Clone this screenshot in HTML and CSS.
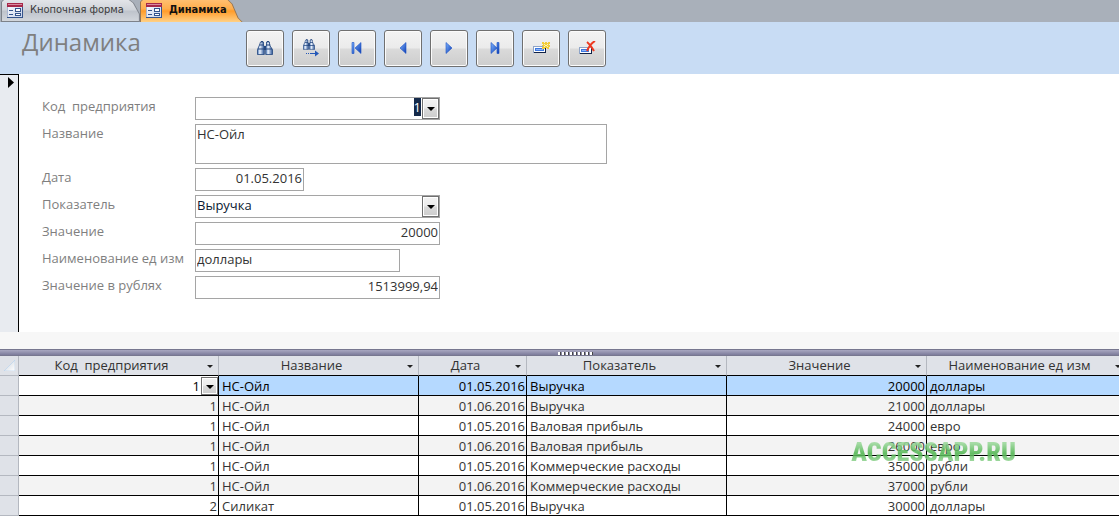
FILE: index.html
```html
<!DOCTYPE html>
<html lang="ru">
<head>
<meta charset="utf-8">
<title>Динамика</title>
<link rel="stylesheet" href="styles.css">
</head>
<body>
<svg class="defs" aria-hidden="true">
  <defs>
    <linearGradient id="blue" x1="0" y1="0" x2="1" y2="1"><stop offset="0" stop-color="#7fb4ff"/><stop offset="1" stop-color="#0c3cb4"/></linearGradient>
    <linearGradient id="steel" x1="0" y1="0" x2="1" y2="0"><stop offset="0" stop-color="#3f70b4"/><stop offset=".35" stop-color="#f0f6ff"/><stop offset="1" stop-color="#2a5496"/></linearGradient>
    <linearGradient id="page" x1="0" y1="0" x2="1" y2="1"><stop offset="0" stop-color="#fff"/><stop offset="1" stop-color="#c4d0ea"/></linearGradient>
    <linearGradient id="corner" x1="0" y1="0" x2="1" y2="1"><stop offset=".4" stop-color="#dfe4ea"/><stop offset="1" stop-color="#fff"/></linearGradient>
    <symbol id="form" viewBox="0 0 16 15">
      <path fill="url(#page)" d="M0 0h16v15H0z"/>
      <path fill="#a62849" d="M0 0h16v4H0z"/><path fill="#d98ba0" d="M1 1h14v1H1z"/>
      <path fill="#a9b6d2" d="M0 4h1v10H0z"/>
      <path fill="#35548c" d="M2 7h4v1H2zM2 11h4v1H2zM8 5h6v4H8zM8 10h6v3H8zM15 4h1v11H0v-1h15z"/>
      <path fill="#fff" d="M9 6h4v2H9zM9 11h4v1H9z"/>
    </symbol>
    <symbol id="binoc" viewBox="0 0 16 14">
      <g fill="url(#steel)" stroke="#24477f" stroke-width=".8">
        <path d="M3.500 1h3v3l.8 2v7.500H.5V8.500l2-4.500z"/><path d="M9.500 1h3v3l3 4.500v5H8.700V6l.8-2z"/>
      </g>
      <path fill="#24477f" d="M4 0h2v1H4zM10 0h2v1h-2zM2.500 3.500h4.500v1H2.500zM9 3.500h4.500v1H9zM1 7.500h6v1H1zM9 7.500h6v1H9zM7 5h2v4H7z"/>
    </symbol>
  </defs>
</svg>

<nav class="tabs">
  <button class="tab" type="button"><svg class="form-icon"><use href="#form"/></svg><span>Кнопочная форма</span></button>
  <button class="tab active" type="button"><svg class="form-icon"><use href="#form"/></svg><span>Динамика</span></button>
</nav>

<header class="head">
  <h1 class="title">Динамика</h1>
  <div class="tools">
    <button class="tool" type="button" aria-label="Найти"><svg width="16" height="14"><use href="#binoc"/></svg></button>
    <button class="tool" type="button" aria-label="Найти далее"><svg width="16" height="18"><use href="#binoc" width="12" height="11"/><path fill="#2558b8" d="M3 14h1v1H3zM5 14h1v1H5zM7 14h5v-2.500l4 3-4 3V15H7z"/></svg></button>
    <button class="tool" type="button" aria-label="Первая запись"><svg width="12" height="12"><path fill="url(#blue)" stroke="#1c50c4" stroke-width=".6" d="M1 .5h2v11H1zM10 .5v11L4 6z"/></svg></button>
    <button class="tool" type="button" aria-label="Предыдущая запись"><svg width="8" height="12"><path fill="url(#blue)" stroke="#1c50c4" stroke-width=".6" d="M7 .5v11L1 6z"/></svg></button>
    <button class="tool" type="button" aria-label="Следующая запись"><svg width="8" height="12"><path fill="url(#blue)" stroke="#1c50c4" stroke-width=".6" d="M1 .5v11L7 6z"/></svg></button>
    <button class="tool" type="button" aria-label="Последняя запись"><svg width="12" height="12"><path fill="url(#blue)" stroke="#1c50c4" stroke-width=".6" d="M2 .5v11L8 6zM8 .5h2v11H8z"/></svg></button>
    <button class="tool" type="button" aria-label="Новая запись"><svg width="17" height="12"><path fill="#8ea4c8" d="M0 4h12v7H0z"/><path fill="#122348" d="M1 11h12V5h-1v5H1z"/><path fill="#fff" d="M1 5h11v5H1z"/><path fill="#3d78e0" d="M2 6h9v3H2z"/><path fill="#8cb4f8" d="M3 7h7v1H3z"/><path fill="#f2cc3c" d="M9 0h2v1h1V0h2v1h1V0h2v2h-1v1h1v2h-1v2h-2V6h-2v1H9V5h1V4H9V3h1V2H9z"/><path fill="#fff7b0" d="M11 2h1v1h-1zM14 2h1v1h-1zM12 3h2v1h-2zM11 4h1v1h-1zM14 4h1v1h-1z"/></svg></button>
    <button class="tool" type="button" aria-label="Удалить запись"><svg width="17" height="14"><path fill="#8ea4c8" d="M0 6h12v7H0z"/><path fill="#122348" d="M1 13h12V7h-1v5H1z"/><path fill="#fff" d="M1 7h11v5H1z"/><path fill="#3d78e0" d="M2 8h8v3H2z"/><path fill="#8cb4f8" d="M3 9h6v1H3z"/><path fill="none" stroke="#ee3a20" stroke-width="2" d="M8 1q4 3 7 9M16 0Q11 3 8 10"/></svg></button>
  </div>
</header>

<main>
  <section class="record">
    <button class="record-selector" type="button" aria-label="Текущая запись"><svg width="6" height="11"><path d="M0 0l6 5.500L0 11z"/></svg></button>
    <form class="fields">
      <label for="code">Код&nbsp; предприятия</label>
      <div class="combo"><input id="code" class="box num" value="1" autocomplete="off"><button class="drop" type="button" aria-label="Открыть список"></button></div>
      <label for="name">Название</label>
      <textarea id="name" class="box tall">НС-Ойл</textarea>
      <label for="date">Дата</label>
      <input id="date" class="box num short" value="01.05.2016">
      <label for="kind">Показатель</label>
      <div class="combo"><select id="kind" class="box dark"><option>Выручка</option></select><span class="drop"></span></div>
      <label for="value">Значение</label>
      <input id="value" class="box num" value="20000">
      <label for="unit">Наименование ед изм</label>
      <input id="unit" class="box medium" value="доллары">
      <label for="rub">Значение в рублях</label>
      <input id="rub" class="box num" value="1513999,94">
    </form>
  </section>
  <div class="foot"></div>
  <div class="splitter"><span class="grip"></span></div>

  <section class="sheet">
    <table>
      <colgroup><col class="c-sel"><col class="c-wide"><col class="c-wide"><col class="c-date"><col class="c-wide"><col class="c-wide"><col class="c-wide"></colgroup>
      <thead>
        <tr>
          <td class="corner"><svg width="11" height="11"><path fill="url(#corner)" stroke="#b4d0ee" stroke-width=".6" d="M11 0v11H0z"/></svg></td>
          <th><div>Код&nbsp; предприятия</div></th><th><div>Название</div></th><th><div>Дата</div></th><th><div>Показатель</div></th><th><div>Значение</div></th><th><div>Наименование ед изм</div></th>
        </tr>
      </thead>
      <tbody>
        <tr class="current"><td class="sel"></td><td class="edit"><div class="combo"><select class="cell-select" aria-label="Код предприятия"><option>1</option></select><span class="drop"></span></div></td><td>НС-Ойл</td><td class="num">01.05.2016</td><td>Выручка</td><td class="num">20000</td><td>доллары</td></tr>
        <tr><td class="sel"></td><td class="num">1</td><td>НС-Ойл</td><td class="num">01.06.2016</td><td>Выручка</td><td class="num">21000</td><td>доллары</td></tr>
        <tr><td class="sel"></td><td class="num">1</td><td>НС-Ойл</td><td class="num">01.05.2016</td><td>Валовая прибыль</td><td class="num">24000</td><td>евро</td></tr>
        <tr><td class="sel"></td><td class="num">1</td><td>НС-Ойл</td><td class="num">01.06.2016</td><td>Валовая прибыль</td><td class="num">26000</td><td>евро</td></tr>
        <tr><td class="sel"></td><td class="num">1</td><td>НС-Ойл</td><td class="num">01.05.2016</td><td>Коммерческие расходы</td><td class="num">35000</td><td>рубли</td></tr>
        <tr><td class="sel"></td><td class="num">1</td><td>НС-Ойл</td><td class="num">01.06.2016</td><td>Коммерческие расходы</td><td class="num">37000</td><td>рубли</td></tr>
        <tr><td class="sel"></td><td class="num">2</td><td>Силикат</td><td class="num">01.05.2016</td><td>Выручка</td><td class="num">30000</td><td>доллары</td></tr>
      </tbody>
    </table>
    <span class="watermark">ACCESSAPP.RU</span>
  </section>
</main>
<script src="form.js"></script>
</body>
</html>
```
FILE: styles.css
```css
* { box-sizing: border-box; }
body { margin: 0; background: #f7f7f7; color: #333; font: 13px/18px "Open Sans", "Noto Sans", sans-serif; overflow: hidden; }
button, input, select, textarea { font: inherit; color: inherit; margin: 0; }
.defs { position: absolute; width: 0; height: 0; }

.tabs { display: flex; height: 22px; padding-left: 1px; background: #a9b0ba; }
.tab { position: relative; z-index: 0; display: flex; align-items: center; gap: 7px; height: 22px; padding: 0 16px 2px 6px; border: 0; background: #7d828a; color: #3a3a3a; font: 11px/14px "DejaVu Sans Condensed", sans-serif; clip-path: polygon(0 2px, 2px 0, calc(100% - 10px) 0, calc(100% - 6px) 3px, 100% 14px, 100% 100%, 0 100%); }
.tab::before { content: ""; position: absolute; z-index: -1; inset: 0 1px 1px 1px; background: linear-gradient(#e2e4e8, #d0d4da 45%, #bfc4cc 55%, #d2d6dc); clip-path: polygon(0 2px, 2px 0, calc(100% - 10px) 0, calc(100% - 6px) 3px, 100% 14px, 100% 100%, 0 100%); }
.tab.active { padding-right: 16px; background: #9a7650; color: #111; font-weight: bold; clip-path: polygon(0 2px, 2px 0, calc(100% - 14px) 0, calc(100% - 10px) 4px, calc(100% - 4px) 18px, 100% 100%, 0 100%); }
.tab.active::before { bottom: 0; background: linear-gradient(#ffbf70, #ffae4d 40%, #ff9c2a 50%, #ffd085); clip-path: polygon(0 2px, 2px 0, calc(100% - 14px) 0, calc(100% - 10px) 4px, calc(100% - 4px) 18px, 100% 100%, 0 100%); }
.form-icon { width: 16px; height: 15px; flex: none; }

.head { display: flex; align-items: flex-start; height: 52px; background: #c8dcf4; }
.title { width: 246px; margin: 0; padding: 4px 0 0 22px; color: #7f7f7f; font-size: 24px; line-height: 32px; font-weight: normal; }
.tools { display: flex; gap: 8px; padding-top: 8px; }
.tool { display: flex; align-items: center; justify-content: center; width: 38px; height: 37px; padding: 0 0 2px; border: 1px solid #707070; border-radius: 3px; background: linear-gradient(#f3f3f3, #ebebeb 48%, #dadada 52%, #cdcdcd); box-shadow: inset 0 0 0 1px #fbfbfb; }

.record { display: flex; height: 258px; background: #fff; }
.record-selector { display: flex; justify-content: flex-end; width: 19px; padding: 2px 4px; border: solid #000; border-width: 1px 1px 0 0; background: #e8ebf0; }
.fields { display: grid; flex: 1; grid-template-columns: 153px minmax(0, 412px); grid-auto-rows: min-content; gap: 4px 0; padding: 23px 23px 0; color: #7f7f7f; }
.box { display: block; width: 245px; height: 23px; padding: 0 1px 3px; border: 1px solid #a5a5a5; border-radius: 0; outline: 0; background: #fff; color: #333; line-height: 18px; appearance: none; }
.box.tall { width: 100%; height: 40px; resize: none; overflow: hidden; }
.box.short { width: 109px; }
.box.medium { width: 205px; }
.box.dark { color: #0b1a33; }
.num { text-align: right; }
.box.num { padding-right: 1px; }
.combo { position: relative; width: 245px; }
.combo .box.num { padding-right: 18px; }
.combo .num::selection { background: #14294a; color: #fff; }
.drop { position: absolute; top: 1px; right: 1px; bottom: 1px; width: 17px; padding: 0; border: 1px solid #707070; background: linear-gradient(#f3f3f3, #ebebeb 48%, #dadada 52%, #cdcdcd); box-shadow: inset 0 0 0 1px #fff; pointer-events: none; }
.drop::after { content: ""; position: absolute; left: 4px; top: 8px; border: solid transparent; border-width: 4px 4px 0; border-top-color: #000; }

.foot { height: 17px; background: #f7f7f7; }
.splitter { display: flex; justify-content: center; height: 7px; padding: 2px 0 0 33px; border: solid #77778f; border-width: 1px 0; background: linear-gradient(#a8a7c0, #7c7b9b); }
.grip { width: 36px; height: 3px; background: repeating-linear-gradient(90deg, #fff 0 2px, #444 2px 3px, transparent 3px 4px); }

.sheet { position: relative; overflow: hidden; }
table { width: 1127px; table-layout: fixed; border-collapse: separate; border-spacing: 0; }
.c-sel { width: 19px; }
.c-wide { width: 200px; }
.c-date { width: 108px; }
th, td { height: 20px; padding: 1px 0 0 3px; border: solid #000; border-width: 0 1px 1px 0; white-space: nowrap; line-height: 18px; }
th { padding: 0 0 1px; border-right-color: #b4b8c0; background: #dfe2e8; font-weight: normal; }
th div { position: relative; padding-right: 14px; text-align: center; }
th div::after { content: ""; position: absolute; right: 5px; top: 9px; border: solid transparent; border-width: 3px 3px 0; border-top-color: #222; }
.corner, .sel { padding: 0; border-color: #b4b8c0; background: #dfe2e8; }
.corner svg { display: block; margin: 0 3px 0 auto; }
td.num { padding: 1px 1px 0 0; }
tbody tr { background: #fff; }
tbody tr:nth-child(even) { background: #f3f3f3; }
tbody tr.current { background: #b5d9ff; color: #000; }
td.edit { padding: 0; background: #fff; }
.edit .combo { width: 100%; height: 19px; }
.edit .drop { top: 1px; right: 0; bottom: 0; }
.edit .drop::after { top: 7px; }
.cell-select { display: block; width: 100%; height: 19px; padding: 1px 18px 0 0; border: 0; background: #fff; text-align: right; text-align-last: right; appearance: none; line-height: 18px; }
.watermark { position: absolute; right: 103px; bottom: 49px; color: transparent; font: 900 26px/30px "Roboto Condensed", Roboto, sans-serif; background: linear-gradient(#9ad89a 20%, #4cb44c 55%, #9ad89a 85%); background-clip: text; opacity: .85; pointer-events: none; }
```
FILE: form.js
```js
const code = document.getElementById('code');
code.focus();
code.select();
```
